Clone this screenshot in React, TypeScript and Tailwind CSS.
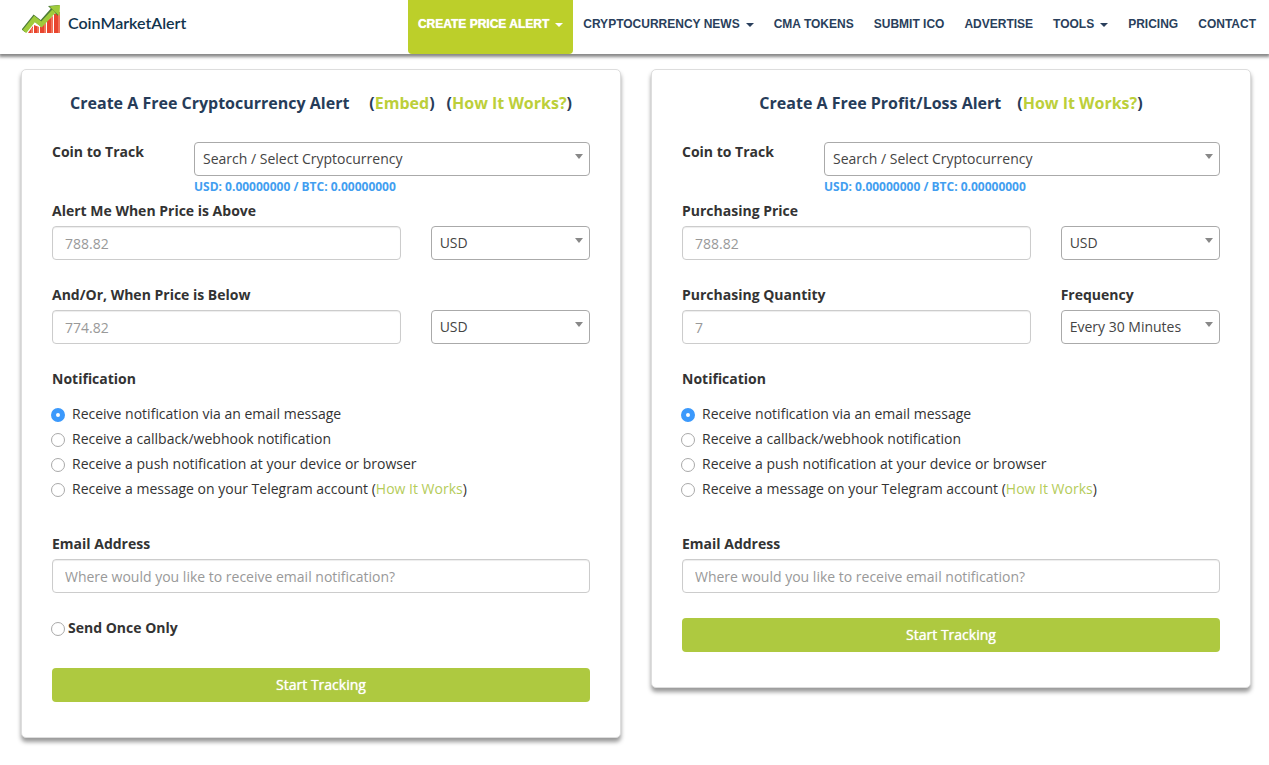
import { useState } from 'react';
import type { ReactNode } from 'react';

const NAV_ITEMS = [
  { label: 'CREATE PRICE ALERT', hasMenu: true, isActive: true },
  { label: 'CRYPTOCURRENCY NEWS', hasMenu: true },
  { label: 'CMA TOKENS' },
  { label: 'SUBMIT ICO' },
  { label: 'ADVERTISE' },
  { label: 'TOOLS', hasMenu: true },
  { label: 'PRICING' },
  { label: 'CONTACT' }
];

const CHANNELS = [
  { value: 'email', label: 'Receive notification via an email message' },
  { value: 'webhook', label: 'Receive a callback/webhook notification' },
  { value: 'push', label: 'Receive a push notification at your device or browser' },
  { value: 'telegram', label: 'Receive a message on your Telegram account', hasHelp: true }
];

const radioClass =
  '-ml-px mt-1 size-3.5 shrink-0 appearance-none rounded-full border border-[#a9a9a9] bg-white checked:border-[5px] checked:border-[#3b99fc]';

function Logo() {
  return (
    <a href="#" className="flex items-start gap-2 pt-[5px]">
      <svg width="38" height="28" viewBox="0 0 38 28" aria-hidden="true">
        <path d="M6 28L11 21V28ZM12 20L17 22V28H12ZM18 22L24 18V28H18ZM25 16L31 11V28H25ZM32 9L38 7V28H32Z" fill="#e8452f" />
        <path d="M10 23V28M16 22V28M23 19V28M30 12V28M37 8V28" stroke="#f4826a" strokeWidth="1.500" />
        <path d="M1.500 26L12 13L19 18.500L31 5" fill="none" stroke="#4f7d38" strokeWidth="5" />
        <path d="M26 1L37 0L36 11Z" fill="#4f7d38" />
        <path d="M2.500 26.500L12.500 14L19.500 19.500L32 6" fill="none" stroke="#9fcb3b" strokeWidth="4.500" />
        <path d="M27.500 1.500L38 0L37.500 11Z" fill="#9fcb3b" />
      </svg>
      <span className="pt-1 font-['Lato',sans-serif] text-base/7 font-semibold text-[#12344d]">CoinMarketAlert</span>
    </a>
  );
}

function Header() {
  return (
    <header className="flex justify-between bg-white pr-[3px] pl-[22px] shadow-[0_2px_3px_1px_#888]">
      <Logo />
      <nav className="flex font-['Liberation_Sans',sans-serif] text-xs/5 font-bold text-[#2a3f5c]">
        {NAV_ITEMS.map((item) => (
          <a
            key={item.label}
            href="#"
            className={
              item.isActive
                ? 'flex items-center rounded-b-sm bg-[#bccf2a] px-2.5 pt-3.5 pb-5 text-white [text-shadow:0_0_1px_#fff]'
                : 'flex items-center px-2.5 pt-3.5 pb-5'
            }
          >
            {item.label}
            {item.hasMenu ? (
              <svg className="mt-0.5 ml-1.5" width="8" height="4" viewBox="0 0 8 4" aria-hidden="true">
                <path d="M0 0H8L4 4Z" fill="currentColor" />
              </svg>
            ) : null}
          </a>
        ))}
      </nav>
    </header>
  );
}

function Card({ children }: { children: ReactNode }) {
  return (
    <form
      onSubmit={(event) => event.preventDefault()}
      className="rounded-[5px] border border-[#ddd] bg-white px-[30px] pt-[23px] pb-[35px] shadow-[0_4px_4px_0_#999]"
    >
      {children}
    </form>
  );
}

function TitleLink({ children }: { children: ReactNode }) {
  return (
    <span>
      (
      <a href="#" className="text-[#bccf3a]">
        {children}
      </a>
      )
    </span>
  );
}

function FieldLabel({ htmlFor, children }: { htmlFor: string; children: ReactNode }) {
  return (
    <label htmlFor={htmlFor} className="mb-[5px] block font-bold">
      {children}
    </label>
  );
}

function TextField({ id, placeholder, type = 'text' }: { id: string; placeholder: string; type?: string }) {
  return (
    <input
      id={id}
      type={type}
      placeholder={placeholder}
      className="block h-[34px] w-full rounded border border-[#ccc] bg-white px-3 shadow-[inset_0_1px_1px_rgba(0,0,0,0.075)] placeholder:text-[#999]"
    />
  );
}

function SelectField({ id, label, options }: { id: string; label?: string; options: string[] }) {
  return (
    <div className="relative">
      <select
        id={id}
        aria-label={label}
        className="block h-[34px] w-full appearance-none rounded border border-[#aaa] bg-white pr-5 pl-2 text-[#444]"
      >
        {options.map((option) => (
          <option key={option}>{option}</option>
        ))}
      </select>
      <svg className="pointer-events-none absolute top-3 right-[7px]" width="8" height="5" viewBox="0 0 8 5" aria-hidden="true">
        <path d="M0 0H8L4 5Z" fill="#888" />
      </svg>
    </div>
  );
}

function CoinRow({ id }: { id: string }) {
  return (
    <div className="mb-[3px] grid grid-cols-12 gap-x-[30px]">
      <label htmlFor={id} className="col-span-3 font-bold">
        Coin to Track
      </label>
      <div className="col-span-9">
        <SelectField id={id} options={['Search / Select Cryptocurrency']} />
        <p className="text-xs/[22px] font-bold text-[#429ef0]">USD: 0.00000000 / BTC: 0.00000000</p>
      </div>
    </div>
  );
}

function Notifications({ name }: { name: string }) {
  const [channel, setChannel] = useState('email');

  return (
    <fieldset className="mb-[35px]">
      <legend className="mb-[15px] font-bold">Notification</legend>
      <div className="space-y-[5px]">
        {CHANNELS.map((item) => (
          <label key={item.value} className="flex">
            <input
              type="radio"
              name={name}
              value={item.value}
              checked={channel === item.value}
              onChange={() => setChannel(item.value)}
              className={radioClass + ' mr-[7px]'}
            />
            <span>
              {item.label}
              {item.hasHelp ? (
                <>
                  {' '}(
                  <a href="#" className="text-[#b5cc5a]">
                    How It Works
                  </a>
                  )
                </>
              ) : null}
            </span>
          </label>
        ))}
      </div>
    </fieldset>
  );
}

function EmailField({ id }: { id: string }) {
  return (
    <div className="mb-[25px]">
      <FieldLabel htmlFor={id}>Email Address</FieldLabel>
      <TextField id={id} type="email" placeholder="Where would you like to receive email notification?" />
    </div>
  );
}

function SubmitButton() {
  return (
    <button
      type="submit"
      className="block h-[34px] w-full rounded bg-[#aec940] font-medium text-white [text-shadow:0_0_1px_#fff]"
    >
      Start Tracking
    </button>
  );
}

function PriceAlertForm() {
  return (
    <Card>
      <h2 className="mb-[29px] flex justify-center text-base/5 font-bold text-[#263c59]">
        <span className="mr-5">Create A Free Cryptocurrency Alert</span>
        <span className="mr-3">
          <TitleLink>Embed</TitleLink>
        </span>
        <TitleLink>How It Works?</TitleLink>
      </h2>
      <CoinRow id="alert-coin" />
      <div className="mb-[25px] grid grid-cols-12 items-end gap-x-[30px]">
        <div className="col-span-8">
          <FieldLabel htmlFor="alert-above">Alert Me When Price is Above</FieldLabel>
          <TextField id="alert-above" placeholder="788.82" />
        </div>
        <div className="col-span-4">
          <SelectField id="alert-above-currency" label="Currency" options={['USD', 'BTC']} />
        </div>
      </div>
      <div className="mb-[25px] grid grid-cols-12 items-end gap-x-[30px]">
        <div className="col-span-8">
          <FieldLabel htmlFor="alert-below">And/Or, When Price is Below</FieldLabel>
          <TextField id="alert-below" placeholder="774.82" />
        </div>
        <div className="col-span-4">
          <SelectField id="alert-below-currency" label="Currency" options={['USD', 'BTC']} />
        </div>
      </div>
      <Notifications name="alert-channel" />
      <EmailField id="alert-email" />
      <label className="mb-[30px] flex font-bold">
        <input type="radio" name="send-once" className={radioClass + ' mr-[3px]'} />
        Send Once Only
      </label>
      <SubmitButton />
    </Card>
  );
}

function ProfitAlertForm() {
  return (
    <Card>
      <h2 className="mb-[29px] flex justify-center text-base/5 font-bold text-[#263c59]">
        <span className="mr-4">Create A Free Profit/Loss Alert</span>
        <TitleLink>How It Works?</TitleLink>
      </h2>
      <CoinRow id="profit-coin" />
      <div className="mb-[25px] grid grid-cols-12 items-end gap-x-[30px]">
        <div className="col-span-8">
          <FieldLabel htmlFor="profit-price">Purchasing Price</FieldLabel>
          <TextField id="profit-price" placeholder="788.82" />
        </div>
        <div className="col-span-4">
          <SelectField id="profit-currency" label="Currency" options={['USD', 'BTC']} />
        </div>
      </div>
      <div className="mb-[25px] grid grid-cols-12 items-end gap-x-[30px]">
        <div className="col-span-8">
          <FieldLabel htmlFor="profit-quantity">Purchasing Quantity</FieldLabel>
          <TextField id="profit-quantity" placeholder="7" />
        </div>
        <div className="col-span-4">
          <FieldLabel htmlFor="profit-frequency">Frequency</FieldLabel>
          <SelectField id="profit-frequency" options={['Every 30 Minutes']} />
        </div>
      </div>
      <Notifications name="profit-channel" />
      <EmailField id="profit-email" />
      <SubmitButton />
    </Card>
  );
}

export default function App() {
  return (
    <div className="min-h-screen bg-white font-['Open_Sans',sans-serif] text-sm/5 text-[#333]">
      <Header />
      <main className="grid grid-cols-2 items-start gap-[30px] pt-[15px] pr-[18px] pb-6 pl-[21px]">
        <PriceAlertForm />
        <ProfitAlertForm />
      </main>
    </div>
  );
}
